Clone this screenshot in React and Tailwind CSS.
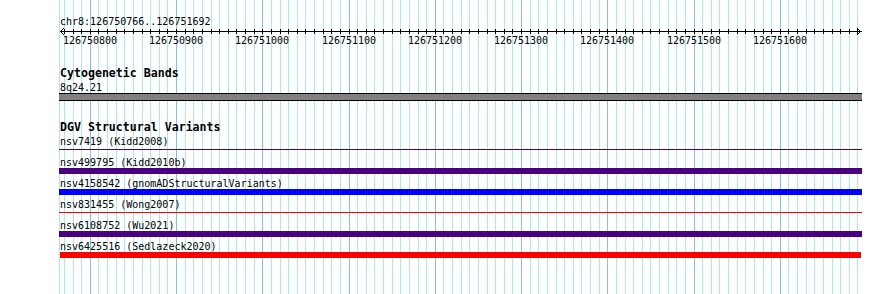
import React from 'react';

// grid columns every 10 bp, major every 100 bp
const gridCols = [];
for (let k = -3; k <= 89; k++) {
    gridCols.push({ x: Math.round(89.8 + k * 8.625), major: k % 10 === 0 });
}

const majorLabels = [];
for (let i = 0; i <= 8; i++) {
    majorLabels.push({ x: Math.round(89.8 + i * 86.25), label: String(126750800 + i * 100) });
}

const variants = [
    { name: 'nsv7419', src: 'Kidd2008', bar: 'mt-[2px] h-[1px] ml-[59px] w-[803px] bg-[#4b0082]' },
    { name: 'nsv499795', src: 'Kidd2010b', bar: 'h-[6px] ml-[59px] w-[803px] bg-[#4b0082]' },
    { name: 'nsv4158542', src: 'gnomADStructuralVariants', bar: 'h-[6px] ml-[59px] w-[803px] bg-[#0000ff]' },
    { name: 'nsv831455', src: 'Wong2007', bar: 'mt-[2px] h-[1px] ml-[59px] w-[803px] bg-[#ff0000]' },
    { name: 'nsv6108752', src: 'Wu2021', bar: 'h-[6px] ml-[59px] w-[803px] bg-[#4b0082]' },
    { name: 'nsv6425516', src: 'Sedlazeck2020', bar: 'h-[6px] ml-[60px] w-[801px] bg-[#ff0000]' },
];

const mono = "font-['DejaVu_Sans_Mono','Liberation_Mono',monospace] text-black";
const small = `${mono} text-[10px] leading-[13px]`;
const bold = `${mono} text-[11.6px] font-bold leading-[13px]`;

function Grid() {
    return (
        <svg className="absolute inset-0" width="890" height="294" shapeRendering="crispEdges">
            <rect x="59" y="0" width="1" height="294" fill="#a8eaf0" />
            {gridCols.map((c) => (
                <rect key={c.x} x={c.x} y="0" width="1" height="294" fill={c.major ? '#80c4ea' : '#a8eaf0'} />
            ))}
        </svg>
    );
}

function Ruler() {
    return (
        <svg className="-mt-[3px] block" width="890" height="22">
            <g shapeRendering="crispEdges">
                <rect x="60" y="5" width="802" height="1" fill="#000" />
                {gridCols.map((c) => (
                    <rect key={c.x} x={c.x} y="3" width="1" height="5" fill="#000" />
                ))}
            </g>
            <polyline points="64,2 60.5,5.5 64,9" fill="none" stroke="#000" strokeWidth="1" />
            <polyline points="857,2 860.5,5.5 857,9" fill="none" stroke="#000" strokeWidth="1" />
            {majorLabels.map((m) => (
                <text
                    key={m.label}
                    x={m.x}
                    y="18"
                    textAnchor="middle"
                    fontFamily="'DejaVu Sans Mono', 'Liberation Mono', monospace"
                    fontSize="10"
                    fill="#000"
                >
                    {m.label}
                </text>
            ))}
        </svg>
    );
}

export default function App() {
    return (
        <div className="relative w-[890px] h-[294px] bg-white overflow-hidden">
            <Grid />
            <div className="relative flex flex-col pt-[15px]">
                <div className={`${small} h-[14px] pl-[60px]`}>chr8:126750766..126751692</div>
                <Ruler />

                <div className={`${bold} mt-[19px] h-[14px] pl-[60px]`}>Cytogenetic Bands</div>
                <div className={`${small} h-[12px] pl-[60px]`}>8q24.21</div>
                <div className="h-[8px] ml-[59px] w-[803px] border-y border-black bg-[#808080]" />

                <div className={`${bold} mt-[20px] h-[14px] pl-[60px]`}>DGV Structural Variants</div>
                {variants.map((v) => (
                    <div key={v.name} className="flex flex-col h-[21px]">
                        <div className={`${small} h-[12px] pl-[60px] whitespace-pre`}>
                            {v.name} ({v.src})
                        </div>
                        <div className={v.bar} />
                    </div>
                ))}
            </div>
        </div>
    );
}
